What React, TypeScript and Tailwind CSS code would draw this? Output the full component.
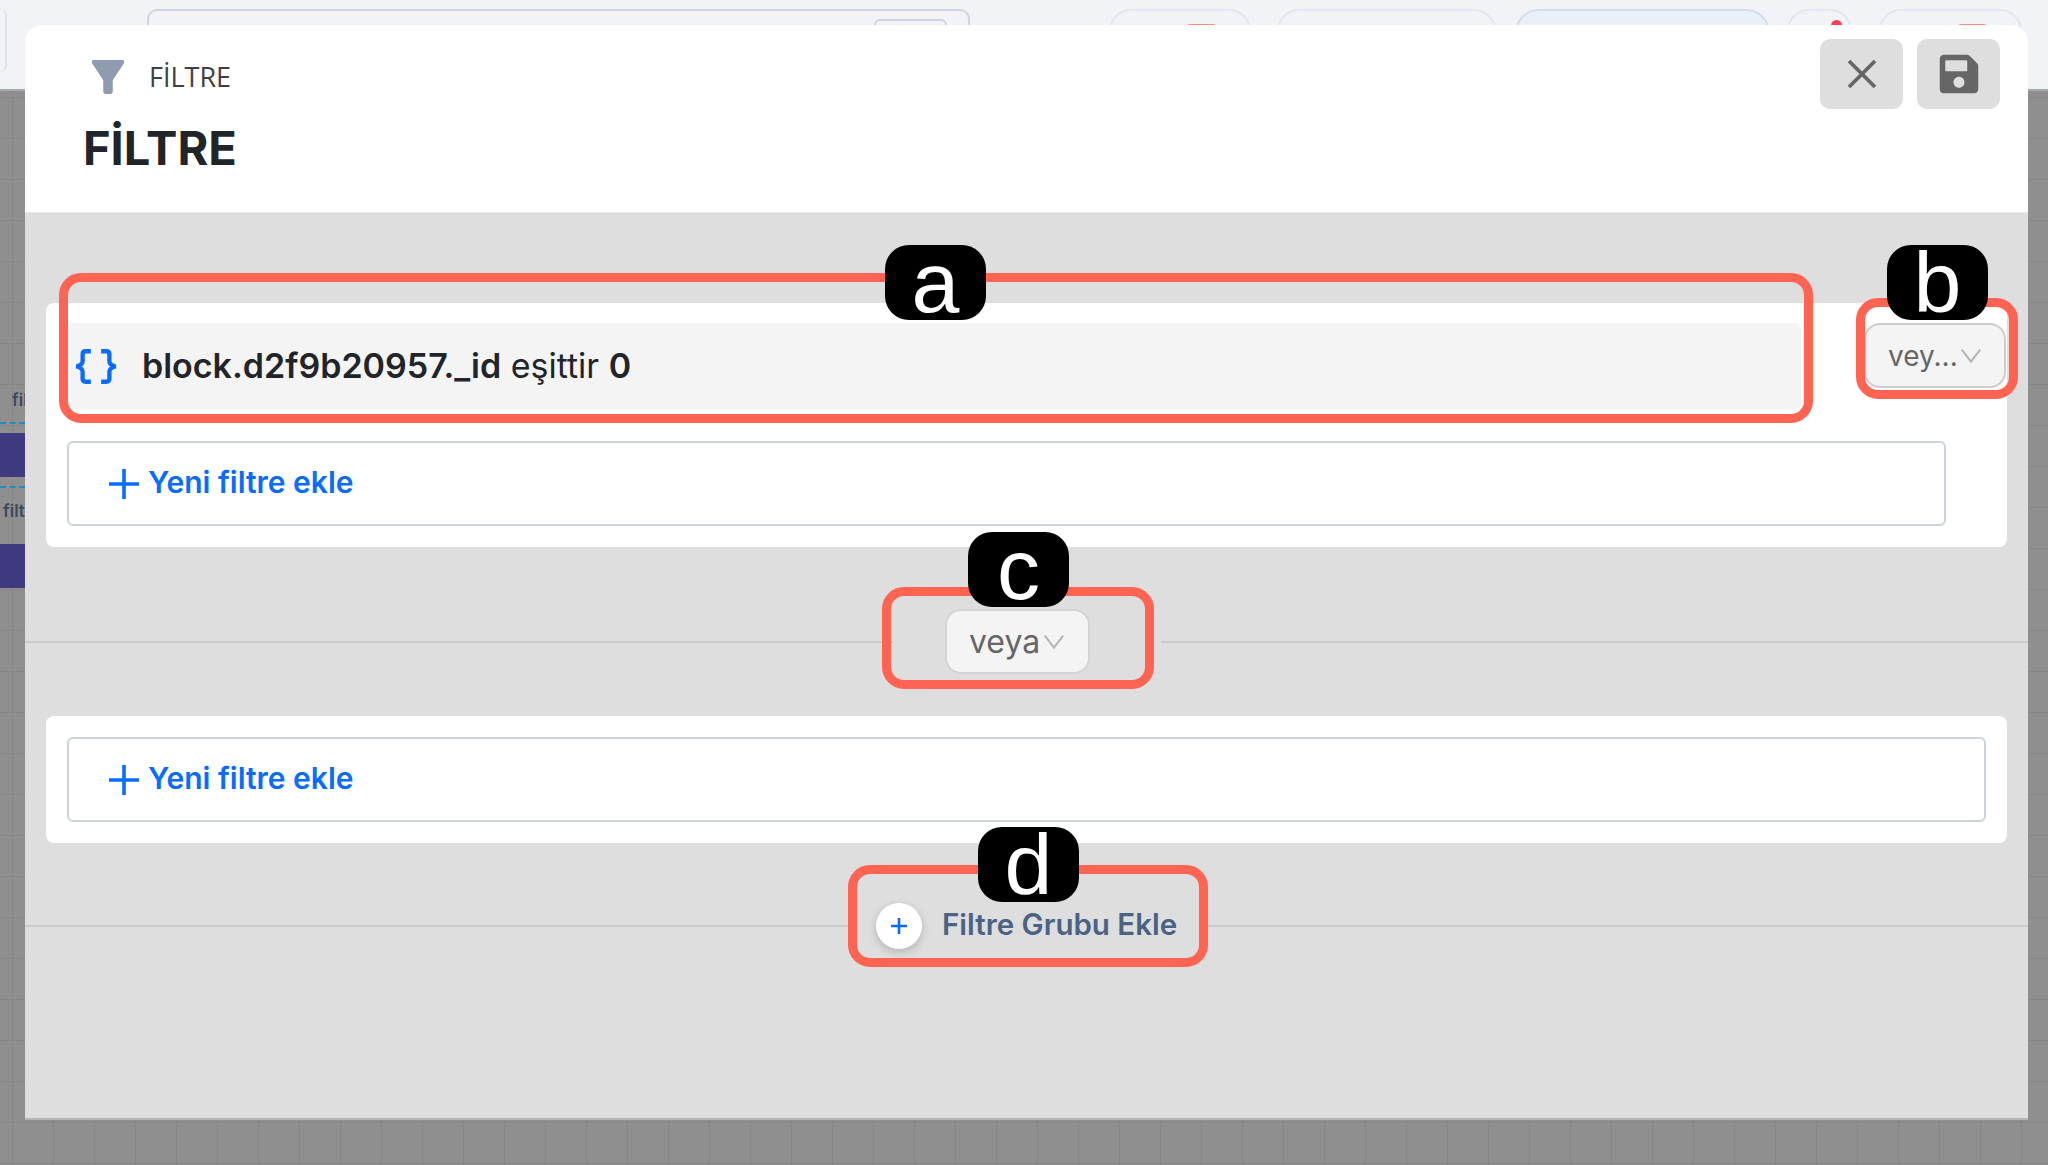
import React from "react";
import { FaSave } from "react-icons/fa";

function Chevron({ className }: { className: string }) {
  return (
    <svg viewBox="0 0 20 14" className={className} fill="none" stroke="#b4b4b4" strokeWidth="2">
      <path d="M0.8 0.7 L10 12.6 L19.2 0.7" />
    </svg>
  );
}

function Plus() {
  return (
    <svg viewBox="0 0 30 30" className="h-[30px] w-[30px] shrink-0" fill="none" stroke="#0a6cff" strokeWidth="3.6">
      <path d="M15 0 V30 M0 15 H30" />
    </svg>
  );
}

function AddFilter({ className }: { className: string }) {
  return (
    <div className={"flex h-[85px] items-center gap-[9px] rounded-[6px] border-2 border-[#cbd2dc] bg-white pl-[40px] " + className}>
      <Plus />
      <span className="pb-[2px] font-['Inter',sans-serif] text-[30px] font-semibold text-[#0a6cff]">Yeni filtre ekle</span>
    </div>
  );
}

function Ring({ className, badge, letter }: { className: string; badge: string; letter: string }) {
  return (
    <>
      <div className={"absolute rounded-[22px] border-[9px] border-[#ff6352] " + className} />
      <div className={"absolute flex h-[75px] w-[101px] items-center justify-center rounded-[24px] bg-black pb-[1px] font-['Liberation_Sans',sans-serif] text-[86px] leading-none text-white " + badge}>
        {letter}
      </div>
    </>
  );
}

export default function App() {
  return (
    <div className="relative flex h-[1165px] w-[2048px] flex-col overflow-hidden bg-[#8f8f8f]">
      <header className="flex h-[91px] shrink-0 items-start border-b-2 border-[#a4a9b0] bg-[#f1f3f7] pt-[9px]">
        <div className="h-[63px] w-[7px] rounded-r-[10px] border-r-2 border-[#dfe3ea]" />
        <div className="ml-[140px] flex h-[60px] w-[823px] justify-end rounded-[10px] border-2 border-[#cdd5de] pr-[21px] pt-[8px]">
          <div className="h-[40px] w-[73px] rounded-[6px] border-2 border-[#cdd5de]" />
        </div>
        <div className="ml-[139px] flex h-[60px] w-[142px] justify-center rounded-[22px] border-2 border-[#e2e6ee] pl-[42px] pt-[13px]">
          <div className="h-[6px] w-[29px] rounded-t-[3px] bg-[#ff8a84]" />
        </div>
        <div className="ml-[26px] h-[60px] w-[219px] rounded-[22px] border-2 border-[#e2e6ee]" />
        <div className="ml-[19px] h-[60px] w-[255px] rounded-[24px] border-2 border-[#d4deea] bg-[#e9f0f8]" />
        <div className="ml-[17px] flex h-[60px] w-[65px] justify-center rounded-[22px] border-2 border-[#e2e6ee] pl-[34px] pt-[9px]">
          <div className="h-[10px] w-[11px] shrink-0 rounded-t-full bg-[#ff3b55]" />
        </div>
        <div className="ml-[27px] flex h-[60px] w-[143px] justify-center rounded-[22px] border-2 border-[#e2e6ee] pl-[44px] pt-[13px]">
          <div className="h-[6px] w-[29px] rounded-t-[3px] bg-[#ff8a84]" />
        </div>
      </header>

      <main className="relative flex-1 bg-[#8f8f8f] bg-[linear-gradient(to_right,#878787_1px,transparent_1px),linear-gradient(to_bottom,#878787_1px,transparent_1px)] bg-size-[41px_41px] bg-position-[12px_6px]">
        <span className="absolute left-[12px] top-[297px] font-['Inter',sans-serif] text-[17px] font-semibold text-[#3c4a5c]">fil</span>
        <div className="absolute left-0 top-[331px] h-0 w-[25px] border-t-2 border-dashed border-[#1d8fc4]" />
        <div className="absolute left-0 top-[342px] h-[44px] w-[25px] bg-[#3f3a80]" />
        <div className="absolute left-0 top-[395px] h-0 w-[25px] border-t-2 border-dashed border-[#1d8fc4]" />
        <span className="absolute left-[3px] top-[408px] font-['Inter',sans-serif] text-[17px] font-semibold text-[#3c4a5c]">filt</span>
        <div className="absolute left-0 top-[453px] h-[44px] w-[25px] bg-[#3f3a80]" />
      </main>

      <section className="absolute left-[25px] top-[25px] flex h-[1095px] w-[2003px] flex-col overflow-hidden rounded-t-[16px] border-b-2 border-[#b5b5b5] bg-[#dedede]">
        <div className="flex h-[188px] shrink-0 justify-between border-b border-[#e8e8e8] bg-white pl-[65px] pr-[28px] pt-[14px]">
          <div className="pt-[21px]">
            <div className="flex items-center gap-[23px]">
              <svg viewBox="-0.5 0 32 33" className="h-[35px] w-[36px]" fill="#8f9bb0">
                <path d="M2 0 H29 Q31.5 0 30.5 3 L20 19 V30 Q20 32 18 32 H13 Q11 32 11 30 V19 L0.5 3 Q-0.5 0 2 0 Z" />
              </svg>
              <span className="pb-[2px] font-['Open_Sans',sans-serif] text-[27px] leading-none text-[#404040]">FİLTRE</span>
            </div>
            <h1 className="ml-[-7px] mt-[29px] font-['Inter',sans-serif] text-[47px] font-bold leading-none text-[#212529]">FİLTRE</h1>
          </div>
          <div className="flex gap-[14px]">
            <button className="flex h-[70px] w-[83px] items-center justify-center rounded-[10px] bg-[#dedede]">
              <svg viewBox="0 0 30 30" className="h-[30px] w-[30px]" fill="none" stroke="#666" strokeWidth="3.8">
                <path d="M2 2 L28 28 M28 2 L2 28" />
              </svg>
            </button>
            <button className="flex h-[70px] w-[83px] items-center justify-center rounded-[10px] bg-[#dedede]">
              <FaSave className="h-[44px] w-[44px] text-[#666]" />
            </button>
          </div>
        </div>

        <div className="flex-1 pt-[90px]">
          <div className="mx-[21px] rounded-[8px] bg-white pb-[21px] pl-[21px] pr-[1px] pt-[20px]">
            <div className="flex items-start">
              <div className="flex h-[86px] w-[1735px] items-center rounded-[6px] bg-[#f4f4f4] pl-[7px]">
                <svg viewBox="0 0 42 34" className="h-[35px] w-[44px] shrink-0" fill="none" stroke="#0a6cff" strokeWidth="4.2">
                  <path d="M16 2.2 H11 Q8 2.2 8 5 V12 Q8 15.5 2 17 Q8 18.5 8 22 V29 Q8 31.8 11 31.8 H16" />
                  <path d="M26 2.2 H31 Q34 2.2 34 5 V12 Q34 15.5 40 17 Q34 18.5 34 22 V29 Q34 31.8 31 31.8 H26" />
                </svg>
                <p className="ml-[24px] pb-[2px] font-['Inter',sans-serif] text-[34px] text-[#212529]">
                  <span className="font-semibold">block.d2f9b20957._id</span> eşittir <span className="font-semibold">0</span>
                </p>
              </div>
              <div className="ml-[63px] flex h-[65px] w-[142px] items-center rounded-[16px] border-2 border-[#cccccc] bg-[#f4f4f4] pl-[22px]">
                <span className="w-[73px] font-['Inter',sans-serif] text-[28px] text-[#666]">vey...</span>
                <Chevron className="h-[14px] w-[20px]" />
              </div>
            </div>
            <AddFilter className="mt-[32px] w-[1879px]" />
          </div>

          <div className="mb-[42px] mt-[62px] flex h-[65px] items-center">
            <div className="h-[2px] w-[868px] bg-[#cbcbcb]" />
            <div className="w-[268px] pl-[52px]">
              <div className="flex h-[65px] w-[145px] items-center rounded-[16px] border-2 border-[#d4d4d4] bg-[#f4f4f4] pl-[22px]">
                <span className="w-[75px] font-['Inter',sans-serif] text-[32px] text-[#666]">veya</span>
                <Chevron className="h-[14px] w-[20px]" />
              </div>
            </div>
            <div className="h-[2px] flex-1 bg-[#cbcbcb]" />
          </div>

          <div className="mx-[21px] rounded-[8px] bg-white px-[21px] py-[21px]">
            <AddFilter className="" />
          </div>

          <div className="mt-[60px] flex h-[46px] items-center">
            <div className="h-[2px] w-[823px] bg-[#cbcbcb]" />
            <div className="flex w-[360px] items-center pl-[28px]">
              <div className="flex h-[46px] w-[46px] items-center justify-center rounded-full bg-white shadow-[0_3px_8px_rgba(0,0,0,0.2)]">
                <svg viewBox="0 0 16 16" className="h-[16px] w-[16px]" fill="none" stroke="#0a6cff" strokeWidth="2.6">
                  <path d="M8 0 V16 M0 8 H16" />
                </svg>
              </div>
              <span className="ml-[20px] pb-[4px] font-['Inter',sans-serif] text-[29.5px] font-semibold text-[#4a6284]">Filtre Grubu Ekle</span>
            </div>
            <div className="h-[2px] flex-1 bg-[#cbcbcb]" />
          </div>
        </div>
      </section>

      <Ring className="left-[59px] top-[273px] h-[150px] w-[1754px]" badge="left-[885px] top-[245px]" letter="a" />
      <Ring className="left-[1856px] top-[298px] h-[101px] w-[162px]" badge="left-[1887px] top-[245px]" letter="b" />
      <Ring className="left-[882px] top-[587px] h-[102px] w-[272px]" badge="left-[968px] top-[532px]" letter="c" />
      <Ring className="left-[848px] top-[865px] h-[102px] w-[360px]" badge="left-[978px] top-[827px]" letter="d" />
    </div>
  );
}
